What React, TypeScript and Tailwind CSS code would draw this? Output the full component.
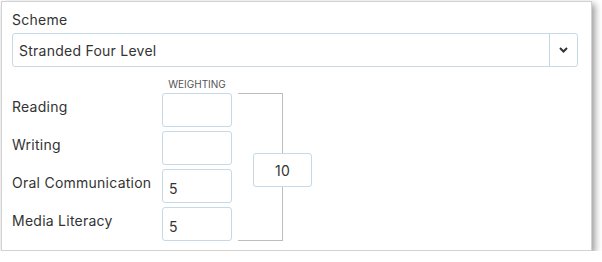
import React from 'react';

const strands = [
  { name: 'Reading', weight: '' },
  { name: 'Writing', weight: '' },
  { name: 'Oral Communication', weight: '5' },
  { name: 'Media Literacy', weight: '5' },
];

const App: React.FC = () => {
  const total = strands.reduce((sum, s) => sum + (parseInt(s.weight) || 0), 0);

  return (
    <div className="pt-[1px] pl-[1px] bg-white font-['Inter','Liberation_Sans',sans-serif] text-[#333] tracking-[0.25px]">
      <div className="w-[591px] h-[250px] border border-[#d2d2d2] bg-white shadow-[3px_3px_7px_rgba(0,0,0,0.4)] pl-[10px] pt-[8px]">
        <div className="text-[14px] leading-[20px] mb-[3px]">Scheme</div>

        {/* Scheme select */}
        <div className="flex w-[566px] h-[34px] border border-[#c5d9e8] rounded-[3px]">
          <div className="flex-1 flex items-center pl-[6px] text-[14px]">Stranded Four Level</div>
          <div className="w-[28px] border-l border-[#c5d9e8] flex items-center justify-center">
            <svg width="9" height="6" viewBox="0 0 9 6">
              <path d="M1 1l3.5 3.5L8 1" fill="none" stroke="#333" strokeWidth="2" />
            </svg>
          </div>
        </div>

        <div className="flex mt-[11px]">
          <div>
            <div className="flex mb-[3px]">
              <div className="w-[150px]" />
              <div className="w-[70px] text-center text-[10px] leading-[12px] text-[#555] tracking-normal">WEIGHTING</div>
            </div>
            <div className="flex flex-col gap-[4px]">
              {strands.map(s => (
                <div key={s.name} className="flex h-[34px]">
                  <div className="w-[150px] text-[14px] leading-[20px] pt-[4px]">{s.name}</div>
                  <div className="w-[70px] h-[34px] border border-[#c5d9e8] rounded-[3px] pl-[6px] pt-[9px] text-[14px] leading-[20px]">
                    {s.weight}
                  </div>
                </div>
              ))}
            </div>
          </div>

          {/* Bracket with total */}
          <div className="flex flex-col ml-[6px] mt-[15px]">
            <div className="w-[45px] h-[60px] border-t border-r border-[#bdbdbd]" />
            <div className="ml-[15px] w-[59px] h-[34px] border border-[#c5d9e8] rounded-[3px] flex items-center justify-center text-[14px]">
              {total}
            </div>
            <div className="w-[45px] h-[54px] border-b border-r border-[#bdbdbd]" />
          </div>
        </div>
      </div>
    </div>
  );
};

export default App;
